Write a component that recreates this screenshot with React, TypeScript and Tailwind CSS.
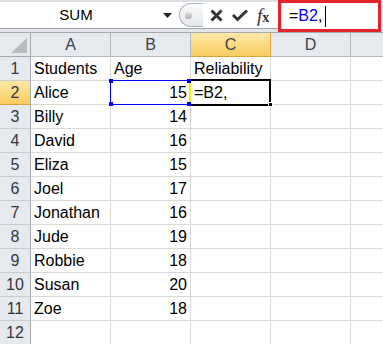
import React from "react";

const data: [string, string | number, string][] = [
  ["Students", "Age", "Reliability"],
  ["Alice", 15, ""],
  ["Billy", 14, ""],
  ["David", 16, ""],
  ["Eliza", 15, ""],
  ["Joel", 17, ""],
  ["Jonathan", 16, ""],
  ["Jude", 19, ""],
  ["Robbie", 18, ""],
  ["Susan", 20, ""],
  ["Zoe", 18, ""],
  ["", "", ""],
];

const cols = ["A", "B", "C", "D"];

function Toolbar() {
  return (
    <div className="flex h-[32px] items-start bg-[#e3e6ea]">
      <div className="flex h-[29px] w-[179px] items-center border-t-2 border-b border-t-[#dcdfe3] border-b-[#9ea2a7] bg-white">
        <div className="w-[152px] pt-px text-center text-[15px] text-black">SUM</div>
        <svg width="9" height="5" viewBox="0 0 9 5" className="ml-[11px]">
          <path d="M0 0 H9 L4.5 5 Z" fill="#222" />
        </svg>
      </div>
      <div className="flex h-[29px] w-[99px] items-center border-t-2 border-b border-t-[#dcdfe3] border-b-[#9ea2a7] bg-white">
        <div className="flex h-[24px] w-[24px] items-center rounded-l-full border border-r-0 border-[#aeb2b7] bg-gradient-to-b from-[#fafbfc] to-[#e3e6ea] pl-[5px]">
          <div className="h-[7px] w-[7px] rounded-full bg-gradient-to-b from-[#e8e8e8] to-[#a9a9a9]" />
        </div>
        <svg width="13" height="13" viewBox="0 0 13 13" className="ml-[7px]">
          <path d="M1.5 1.5 L11.5 11.5 M11.5 1.5 L1.5 11.5" stroke="#333" strokeWidth="3" strokeLinecap="butt" />
        </svg>
        <svg width="16" height="13" viewBox="0 0 16 13" className="ml-[9px]">
          <path d="M1 6 L5.5 10.5 L15 1.5" stroke="#333" strokeWidth="3" fill="none" />
        </svg>
        <span className="ml-[9px] font-['Liberation_Serif',serif] text-[19px] italic leading-none text-[#333]">
          f<span className="text-[14px] font-bold not-italic">x</span>
        </span>
      </div>
      <div className="mr-[2px] flex h-[32px] flex-1 items-center border-[3px] border-[#e8222b] bg-white pl-[8px]">
        <span className="text-[16px] text-black">
          =<span className="text-[#0000ff]">B2</span>,
        </span>
        <span className="ml-[3px] h-[21px] w-px bg-black" />
      </div>
    </div>
  );
}

export default function App() {
  return (
    <div className="h-[344px] w-[383px] overflow-hidden bg-white font-['Liberation_Sans',Arial,sans-serif]">
      <Toolbar />
      <div className="grid grid-cols-[31px_80px_80px_80px_80px_1fr] border-t border-[#a5a9ae]">
        <div className="relative h-[24px] border-r border-b border-[#a5a9ae] bg-[#e6e9ed]">
          <svg width="16" height="15" viewBox="0 0 16 15" className="absolute left-[11px] top-[5px]">
            <path d="M16 0 L16 15 L0 15 Z" fill="#b9bdc1" />
          </svg>
        </div>
        {cols.map((c) => (
          <div
            key={c}
            className={
              c === "C"
                ? "flex h-[24px] items-center justify-center border-r border-b border-r-[#e3a94a] border-b-[#d9a03d] bg-gradient-to-b from-[#fde7a6] to-[#f8cc5c] pt-px text-[16px] text-[#3b3f48]"
                : "flex h-[24px] items-center justify-center border-r border-b border-[#b3b7bc] bg-[#e6e9ed] pt-px text-[16px] text-[#3b4351]"
            }
          >
            {c}
          </div>
        ))}
        <div className="h-[24px] border-b border-[#b3b7bc] bg-[#e6e9ed]" />

        {data.map((row, i) => {
          const r = i + 1;
          const sel = r === 2;
          return (
            <React.Fragment key={r}>
              <div
                className={
                  sel
                    ? "flex h-[24px] items-center justify-center border-r border-b border-r-[#a5a9ae] border-b-[#d9a03d] bg-gradient-to-b from-[#fde7a6] to-[#f8cc5c] pt-px text-[16px] text-[#33363d]"
                    : "flex h-[24px] items-center justify-center border-r border-b border-r-[#a5a9ae] border-b-[#c8cbcf] bg-[#e6e9ed] pt-px text-[16px] text-[#33363d]"
                }
              >
                {r}
              </div>
              <div className="flex h-[24px] items-center border-r border-b border-[#d9d9d9] pl-[3px] pt-px text-[16px] text-black">
                {row[0]}
              </div>
              <div
                className={
                  "relative flex h-[24px] items-center border-r border-b border-[#d9d9d9] pt-px text-[16px] text-black " +
                  (typeof row[1] === "number" ? "justify-end pr-[3px]" : "pl-[3px]")
                }
              >
                {row[1]}
                {sel && (
                  <>
                    <div className="absolute -left-px -top-px h-[25px] w-[80px] border border-[#0000ff]" />
                    <div className="absolute -left-[2px] -top-[2px] z-20 h-[4px] w-[4px] bg-[#0000ff]" />
                    <div className="absolute -left-[2px] top-[21px] z-20 h-[4px] w-[4px] bg-[#0000ff]" />
                    <div className="absolute left-[76px] -top-[2px] z-20 h-[4px] w-[4px] bg-[#0000ff]" />
                    <div className="absolute left-[76px] top-[21px] z-20 h-[4px] w-[4px] bg-[#0000ff]" />
                  </>
                )}
              </div>
              <div className="relative flex h-[24px] items-center border-r border-b border-[#d9d9d9] pl-[3px] pt-px text-[16px] text-black">
                {sel ? "=B2," : row[2]}
                {sel && (
                  <>
                    <div className="absolute -left-[2px] -top-[2px] z-10 h-[27px] w-[82px] border-2 border-black border-l-[#f2f200]" />
                    <div className="absolute left-[77px] top-[21px] z-10 h-[5px] w-[5px] border border-white bg-black" />
                  </>
                )}
              </div>
              <div className="h-[24px] border-r border-b border-[#d9d9d9]" />
              <div className="h-[24px] border-b border-[#d9d9d9]" />
            </React.Fragment>
          );
        })}
      </div>
    </div>
  );
}
